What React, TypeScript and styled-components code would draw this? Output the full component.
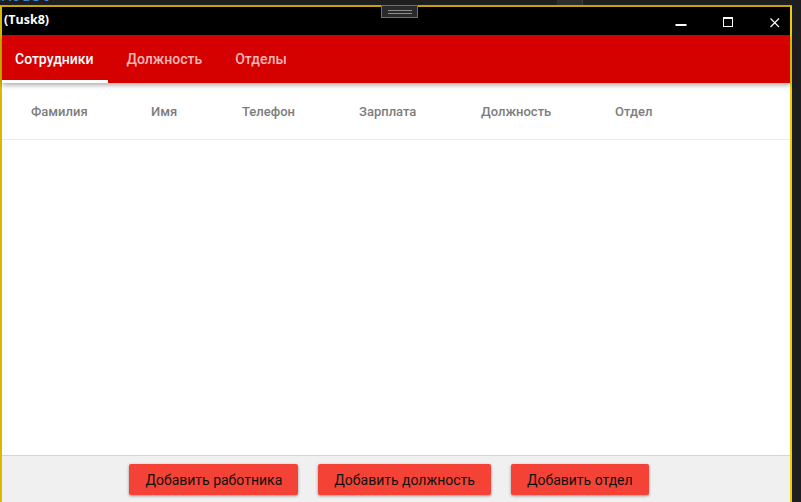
import React from "react";
import styled, { createGlobalStyle } from "styled-components";

const Global = createGlobalStyle`
  html, body { margin: 0; padding: 0; background: #1e1e1e; overflow: hidden; }
  * { box-sizing: border-box; }
`;

const Screen = styled.div`
  width: 801px;
  height: 502px;
  display: flex;
  flex-direction: column;
  position: relative;
  background: #1e1e1e;
  font-family: Roboto, "Noto Sans", sans-serif;
`;

const TopStrip = styled.div`
  height: 5px;
  overflow: hidden;
  position: relative;
  background: #1e1e1e;
`;

const EditorText = styled.span`
  display: block;
  margin-top: -12px;
  margin-left: -8px;
  font-family: "DejaVu Sans Mono", monospace;
  font-size: 16px;
  line-height: 16px;
  color: #3b8ee6;
`;

const TabStub = styled.div`
  position: absolute;
  left: 557px;
  top: 0;
  width: 26px;
  height: 5px;
  background: #2d2d2d;
  border-right: 1px solid #3c3c3c;
`;

const Main = styled.div`
  flex: 1;
  display: flex;
  min-height: 0;
`;

const Window = styled.div`
  width: 792px;
  display: flex;
  flex-direction: column;
  border-top: 2px solid #c9a400;
  border-left: 2px solid #d8b800;
  border-right: 2px solid #f0cc00;
  background: #ffffff;
`;

const SideStrip = styled.div`
  flex: 1;
  background: #1e1e1e;
`;

const TitleBar = styled.div`
  height: 28px;
  background: #000;
  display: flex;
  align-items: flex-start;
  justify-content: space-between;
`;

const Title = styled.div`
  color: #fff;
  font-family: "Open Sans", "Noto Sans", sans-serif;
  font-weight: 700;
  font-size: 12.5px;
  line-height: 16px;
  padding: 5px 0 0 2px;
`;

const Controls = styled.div`
  display: flex;
  gap: 17px;
  height: 100%;
`;

const ControlButton = styled.div`
  width: 30px;
  height: 100%;
  display: flex;
  justify-content: center;
  padding-top: 13px;
`;

const Grip = styled.div`
  position: absolute;
  left: 381px;
  top: 5px;
  width: 37px;
  height: 13px;
  background: #2a2a2a;
  border: 1px solid #707070;
  display: flex;
  flex-direction: column;
  justify-content: center;
  align-items: center;
  gap: 2px;
`;

const GripLine = styled.div`
  width: 24px;
  height: 1px;
  background: #8c8c8c;
`;

const TabBar = styled.div`
  height: 48px;
  background: #d50000;
  display: flex;
  position: relative;
  z-index: 2;
  box-shadow: 0 2px 5px rgba(0, 0, 0, 0.35);
`;

const Tab = styled.div<{ $active?: boolean }>`
  display: flex;
  align-items: center;
  padding: 3px 15px 0 13px;
  margin-right: 5px;
  font-weight: 500;
  font-size: 14px;
  color: ${(p) => (p.$active ? "#ffffff" : "rgba(255,255,255,0.72)")};
  border-bottom: 3px solid ${(p) => (p.$active ? "#ffffff" : "transparent")};
`;

const Content = styled.div`
  flex: 1;
  display: flex;
  flex-direction: column;
  background: #fff;
`;

const HeaderRow = styled.div`
  height: 57px;
  display: grid;
  grid-template-columns: 120px 91px 117px 122px 134px 1fr;
  align-items: center;
  padding-left: 29px;
  border-bottom: 1px solid #ebebeb;
`;

const HeaderCell = styled.div`
  font-size: 13px;
  font-weight: 500;
  color: #7d7d7d;
`;

const Body = styled.div`
  flex: 1;
`;

const Footer = styled.div`
  height: 47px;
  border-top: 1px solid #d4d4d4;
  background: #f0f0f0;
  display: flex;
  justify-content: center;
  align-items: flex-start;
  gap: 20px;
  padding-top: 8px;
  padding-right: 14px;
`;

const ActionButton = styled.div`
  height: 31px;
  padding: 0 16px;
  display: flex;
  align-items: center;
  background: #f44336;
  color: #111;
  font-size: 14px;
  font-weight: 400;
  border-radius: 2px;
  box-shadow: 0 1px 3px rgba(0, 0, 0, 0.4);
`;

const columns = ["Фамилия", "Имя", "Телефон", "Зарплата", "Должность", "Отдел"];

export default function App() {
  return (
    <>
      <Global />
      <Screen>
        <TopStrip>
          <EditorText>uModel</EditorText>
          <TabStub />
        </TopStrip>
        <Main>
          <Window>
            <TitleBar>
              <Title>(Tusk8)</Title>
              <Controls>
                <ControlButton>
                  <svg width="12" height="12" viewBox="0 0 12 12">
                    <rect x="0.5" y="4" width="11" height="2" fill="#fff" />
                  </svg>
                </ControlButton>
                <ControlButton>
                  <svg width="12" height="12" viewBox="0 0 12 12" style={{ marginTop: -4 }}>
                    <rect x="1.5" y="1.5" width="9" height="9" fill="none" stroke="#fff" strokeWidth="1" />
                    <rect x="1" y="1" width="10" height="2" fill="#fff" />
                  </svg>
                </ControlButton>
                <ControlButton>
                  <svg width="12" height="12" viewBox="0 0 12 12" style={{ marginTop: -3 }}>
                    <path d="M1.5 1.5 L10 10 M10 1.5 L1.5 10" stroke="#fff" strokeWidth="1.1" fill="none" />
                  </svg>
                </ControlButton>
              </Controls>
            </TitleBar>
            <TabBar>
              <Tab $active>Сотрудники</Tab>
              <Tab>Должность</Tab>
              <Tab>Отделы</Tab>
            </TabBar>
            <Content>
              <HeaderRow>
                {columns.map((c) => (
                  <HeaderCell key={c}>{c}</HeaderCell>
                ))}
              </HeaderRow>
              <Body />
              <Footer>
                <ActionButton>Добавить работника</ActionButton>
                <ActionButton>Добавить должность</ActionButton>
                <ActionButton>Добавить отдел</ActionButton>
              </Footer>
            </Content>
          </Window>
          <SideStrip />
        </Main>
        <Grip>
          <GripLine />
          <GripLine />
        </Grip>
      </Screen>
    </>
  );
}
